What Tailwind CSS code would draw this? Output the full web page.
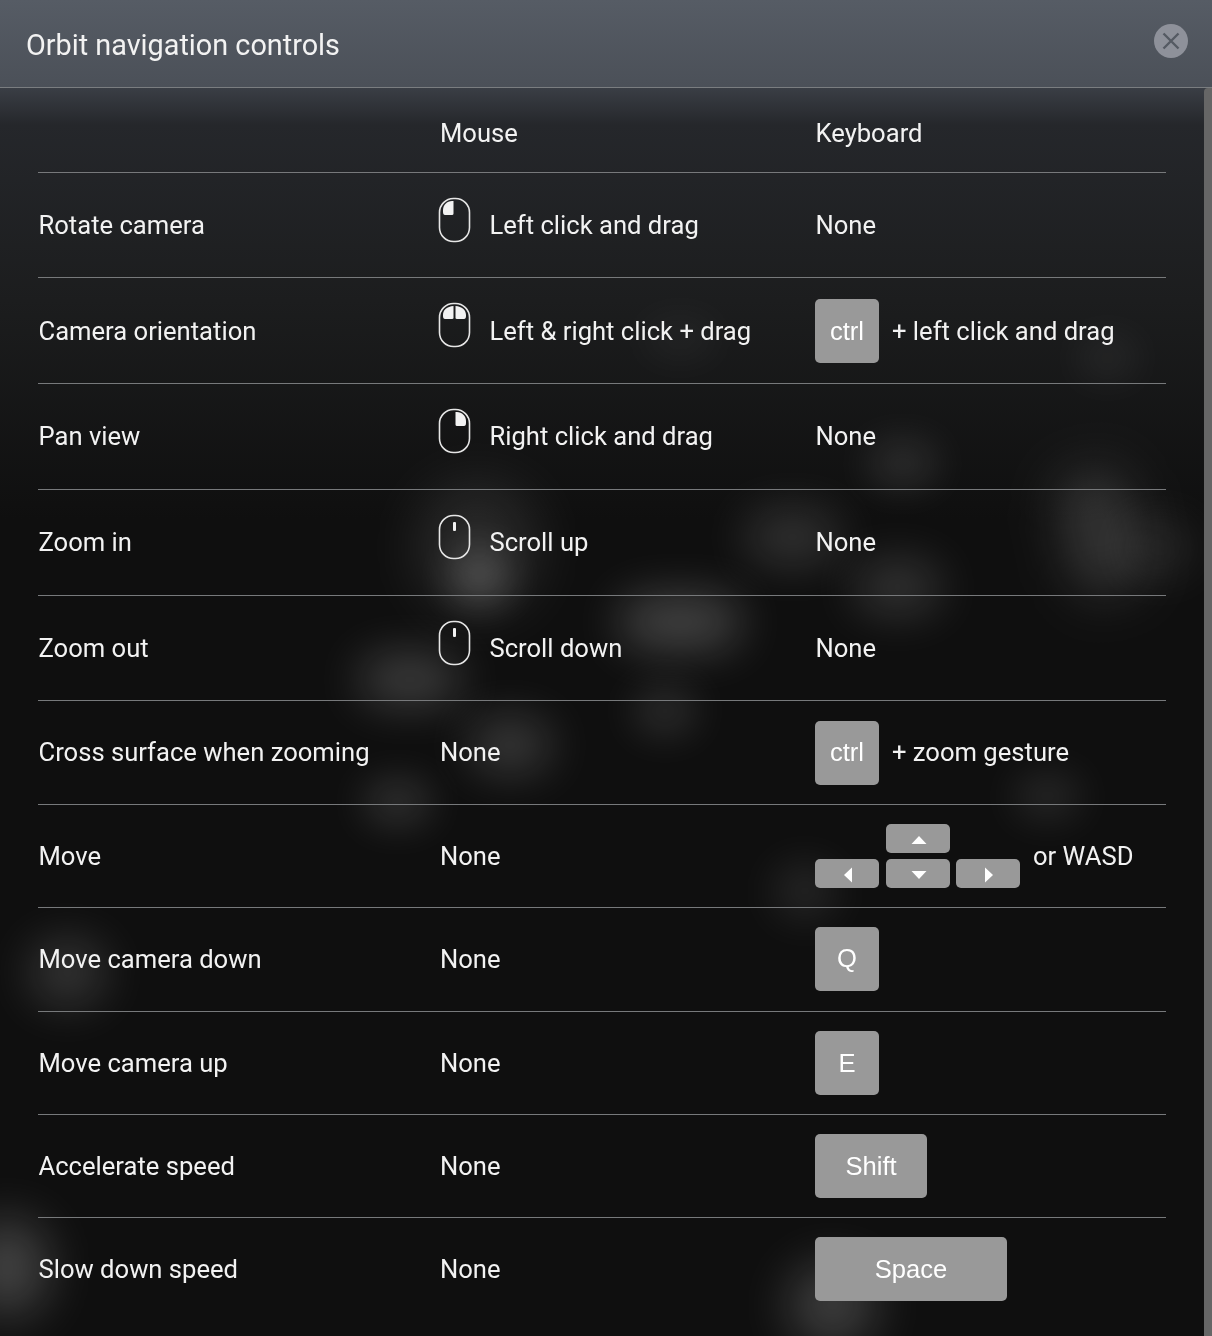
<!DOCTYPE html>
<html lang="en">

<head>
	<meta charset="UTF-8" />
	<title>Orbit navigation controls</title>
	<script src="https://cdn.jsdelivr.net/npm/@tailwindcss/browser@4"></script>
</head>

<body class="bg-[#0f0f0f] font-['Roboto',sans-serif] text-[25.6px] text-[#f2f2f2] overflow-hidden">
	<div class="relative w-[1212px] h-[1336px] overflow-hidden">

		<!-- blurred scene behind the dialog -->
		<div class="absolute inset-0 bg-[linear-gradient(180deg,#3a3e45_88px,#25272b_125px,#1c1d1e_300px,#0f0f0f_520px)]"></div>
		<div class="absolute left-[420px] top-[485px] w-[115px] h-[125px] rounded-full bg-white/12 blur-[30px]"></div>
		<div class="absolute left-[450px] top-[550px] w-[60px] h-[55px] rounded-full bg-white/18 blur-[18px]"></div>
		<div class="absolute left-[620px] top-[597px] w-[120px] h-[50px] rounded-full bg-white/24 blur-[24px]"></div>
		<div class="absolute left-[360px] top-[657px] w-[100px] h-[45px] rounded-full bg-white/22 blur-[24px]"></div>
		<div class="absolute left-[470px] top-[720px] w-[80px] h-[50px] rounded-full bg-white/20 blur-[24px]"></div>
		<div class="absolute left-[365px] top-[782px] w-[65px] h-[40px] rounded-full bg-white/16 blur-[20px]"></div>
		<div class="absolute left-[635px] top-[690px] w-[60px] h-[42px] rounded-full bg-white/14 blur-[20px]"></div>
		<div class="absolute left-[745px] top-[512px] w-[95px] h-[50px] rounded-full bg-white/16 blur-[24px]"></div>
		<div class="absolute left-[855px] top-[562px] w-[85px] h-[50px] rounded-full bg-white/17 blur-[24px]"></div>
		<div class="absolute left-[870px] top-[445px] w-[65px] h-[38px] rounded-full bg-white/14 blur-[20px]"></div>
		<div class="absolute left-[1065px] top-[470px] w-[70px] h-[125px] -rotate-12 rounded-full bg-white/16 blur-[26px]"></div>
		<div class="absolute left-[1125px] top-[520px] w-[70px] h-[55px] rounded-full bg-white/9 blur-[24px]"></div>
		<div class="absolute left-[1080px] top-[340px] w-[55px] h-[36px] rounded-full bg-white/8 blur-[20px]"></div>
		<div class="absolute left-[1015px] top-[775px] w-[65px] h-[42px] rounded-full bg-white/11 blur-[20px]"></div>
		<div class="absolute left-[775px] top-[865px] w-[60px] h-[52px] rounded-full bg-white/11 blur-[22px]"></div>
		<div class="absolute left-[30px] top-[940px] w-[75px] h-[65px] rounded-full bg-white/17 blur-[24px]"></div>
		<div class="absolute left-[-30px] top-[1220px] w-[75px] h-[95px] rounded-full bg-white/24 blur-[26px]"></div>
		<div class="absolute left-[790px] top-[1265px] w-[85px] h-[80px] rounded-full bg-white/22 blur-[26px]"></div>
		<div class="absolute left-[645px] top-[320px] w-[70px] h-[36px] rounded-full bg-white/5 blur-[20px]"></div>

		<!-- title bar -->
		<div class="relative will-change-transform h-[88px] flex items-center justify-between pl-[26px] pr-[24px] bg-gradient-to-b from-[#565c65] to-[#4b5058] border-b border-[#7a7d80]">
			<h1 class="text-[28.8px] mt-[5px]">Orbit navigation controls</h1>
			<button class="w-[34px] h-[34px] mb-[5px] rounded-full bg-[#8e919a] flex items-center justify-center">
				<svg width="18" height="18" viewBox="0 0 18 18" fill="none" stroke="#555a63" stroke-width="2.4"><path d="M1.500 1.500 16.500 16.500M16.500 1.500 1.500 16.500" /></svg>
			</button>
		</div>

		<!-- scrollbar -->
		<div class="absolute right-0 top-[88px] bottom-0 w-[8px] bg-[#666] rounded-tl-[4px]"></div>

		<!-- table -->
		<div class="relative will-change-transform ml-[38px] w-[1128px]">
			<div class="flex items-center h-[85px] pt-[6px] border-b border-[#77797b]">
				<div class="w-[402px]"></div>
				<div class="w-[375.500px]">Mouse</div>
				<div>Keyboard</div>
			</div>

			<div class="flex items-center h-[105px] border-b border-[#77797b]">
				<div class="w-[402px] pl-[0.500px]">Rotate camera</div>
				<div class="w-[375.500px] flex items-center gap-[18.500px]">
					<svg class="-ml-[2px] -mt-[10px]" width="33" height="46" viewBox="0 0 33 46" fill="none"><rect x="1.500" y="1.500" width="30" height="43" rx="14" stroke="#e6e6e6" stroke-width="1.600" /><path d="M5 15V13C5 8 9 4 14 4H15.500V16.500Q15.500 18 14 18H7Q5 18 5 15Z" fill="#f2f2f2" /></svg>
					<span>Left click and drag</span>
				</div>
				<div>None</div>
			</div>

			<div class="flex items-center h-[106px] border-b border-[#77797b]">
				<div class="w-[402px] pl-[0.500px] mt-[2px]">Camera orientation</div>
				<div class="w-[375.500px] flex items-center gap-[18.500px]">
					<svg class="-ml-[2px] -mt-[10px]" width="33" height="46" viewBox="0 0 33 46" fill="none"><rect x="1.500" y="1.500" width="30" height="43" rx="14" stroke="#e6e6e6" stroke-width="1.600" /><path d="M5 14V13C5 8 9 4.500 15.500 4V16Q15.500 17 14 17H7Q5 17 5 14ZM28 14V13C28 8 24 4.500 17.500 4V16Q17.500 17 19 17H26Q28 17 28 14Z" fill="#f2f2f2" /></svg>
					<span class="mt-[2px]">Left &amp; right click + drag</span>
				</div>
				<div class="-ml-[0.500px] flex items-center gap-[13px]">
					<div class="w-[64px] h-[64px] pt-[2px] rounded-[5px] bg-[#999] text-white font-['Liberation_Sans',sans-serif] flex items-center justify-center">ctrl</div>
					<span class="mt-[2px]">+ left click and drag</span>
				</div>
			</div>

			<div class="flex items-center h-[106px] border-b border-[#77797b]">
				<div class="w-[402px] pl-[0.500px]">Pan view</div>
				<div class="w-[375.500px] flex items-center gap-[18.500px]">
					<svg class="-ml-[2px] -mt-[10px]" width="33" height="46" viewBox="0 0 33 46" fill="none"><rect x="1.500" y="1.500" width="30" height="43" rx="14" stroke="#e6e6e6" stroke-width="1.600" /><path d="M28 15V13C28 8 24 4 19 4H17.500V16.500Q17.500 18 19 18H26Q28 18 28 15Z" fill="#f2f2f2" /></svg>
					<span>Right click and drag</span>
				</div>
				<div>None</div>
			</div>

			<div class="flex items-center h-[106px] border-b border-[#77797b]">
				<div class="w-[402px] pl-[0.500px]">Zoom in</div>
				<div class="w-[375.500px] flex items-center gap-[18.500px]">
					<svg class="-ml-[2px] -mt-[10px]" width="33" height="46" viewBox="0 0 33 46" fill="none"><rect x="1.500" y="1.500" width="30" height="43" rx="14" stroke="#e6e6e6" stroke-width="1.600" /><rect x="15" y="8" width="3" height="9" rx="1" fill="#f2f2f2" /></svg>
					<span>Scroll up</span>
				</div>
				<div>None</div>
			</div>

			<div class="flex items-center h-[105px] border-b border-[#77797b]">
				<div class="w-[402px] pl-[0.500px]">Zoom out</div>
				<div class="w-[375.500px] flex items-center gap-[18.500px]">
					<svg class="-ml-[2px] -mt-[10px]" width="33" height="46" viewBox="0 0 33 46" fill="none"><rect x="1.500" y="1.500" width="30" height="43" rx="14" stroke="#e6e6e6" stroke-width="1.600" /><rect x="15" y="8" width="3" height="9" rx="1" fill="#f2f2f2" /></svg>
					<span>Scroll down</span>
				</div>
				<div>None</div>
			</div>

			<div class="flex items-center h-[104px] border-b border-[#77797b]">
				<div class="w-[402px] pl-[0.500px]">Cross surface when zooming</div>
				<div class="w-[375.500px]">None</div>
				<div class="-ml-[0.500px] flex items-center gap-[13px]">
					<div class="w-[64px] h-[64px] rounded-[5px] bg-[#999] text-white font-['Liberation_Sans',sans-serif] flex items-center justify-center">ctrl</div>
					<span>+ zoom gesture</span>
				</div>
			</div>

			<div class="flex items-center h-[103px] border-b border-[#77797b]">
				<div class="w-[402px] pl-[0.500px]">Move</div>
				<div class="w-[375.500px]">None</div>
				<div class="-ml-[0.500px] flex items-center gap-[13px]">
					<div class="grid grid-cols-[64px_64px_64px] gap-x-[6.500px] gap-y-[6px]">
						<div class="col-start-2 h-[29px] pl-[2px] pt-[2px] rounded-[5px] bg-[#999] flex items-center justify-center">
							<svg width="16" height="10" viewBox="0 0 16 10"><path d="M8 1 15.500 9H.5Z" fill="#fff" /></svg>
						</div>
						<div class="col-start-1 h-[29px] pl-[2px] pt-[2px] rounded-[5px] bg-[#999] flex items-center justify-center">
							<svg width="10" height="16" viewBox="0 0 10 16"><path d="M1 8 9 .5V15.500Z" fill="#fff" /></svg>
						</div>
						<div class="h-[29px] pl-[2px] pt-[2px] rounded-[5px] bg-[#999] flex items-center justify-center">
							<svg width="16" height="10" viewBox="0 0 16 10"><path d="M8 9 15.500 1H.5Z" fill="#fff" /></svg>
						</div>
						<div class="h-[29px] pl-[2px] pt-[2px] rounded-[5px] bg-[#999] flex items-center justify-center">
							<svg width="10" height="16" viewBox="0 0 10 16"><path d="M9 8 1 .5V15.500Z" fill="#fff" /></svg>
						</div>
					</div>
					<span>or WASD</span>
				</div>
			</div>

			<div class="flex items-center h-[104px] border-b border-[#77797b]">
				<div class="w-[402px] pl-[0.500px]">Move camera down</div>
				<div class="w-[375.500px]">None</div>
				<div class="-ml-[0.500px] mb-[2px] w-[64px] h-[64px] rounded-[5px] bg-[#999] text-white font-['Liberation_Sans',sans-serif] flex items-center justify-center">Q</div>
			</div>

			<div class="flex items-center h-[103px] border-b border-[#77797b]">
				<div class="w-[402px] pl-[0.500px]">Move camera up</div>
				<div class="w-[375.500px]">None</div>
				<div class="-ml-[0.500px] w-[64px] h-[64px] rounded-[5px] bg-[#999] text-white font-['Liberation_Sans',sans-serif] flex items-center justify-center">E</div>
			</div>

			<div class="flex items-center h-[103px] border-b border-[#77797b]">
				<div class="w-[402px] pl-[0.500px]">Accelerate speed</div>
				<div class="w-[375.500px]">None</div>
				<div class="-ml-[0.500px] w-[112px] h-[64px] rounded-[5px] bg-[#999] text-white font-['Liberation_Sans',sans-serif] flex items-center justify-center">Shift</div>
			</div>

			<div class="flex items-center h-[103px]">
				<div class="w-[402px] pl-[0.500px]">Slow down speed</div>
				<div class="w-[375.500px]">None</div>
				<div class="-ml-[0.500px] mb-[2px] pt-[2px] w-[192px] h-[64px] rounded-[5px] bg-[#999] text-white font-['Liberation_Sans',sans-serif] flex items-center justify-center">Space</div>
			</div>
		</div>
	</div>
</body>

</html>
